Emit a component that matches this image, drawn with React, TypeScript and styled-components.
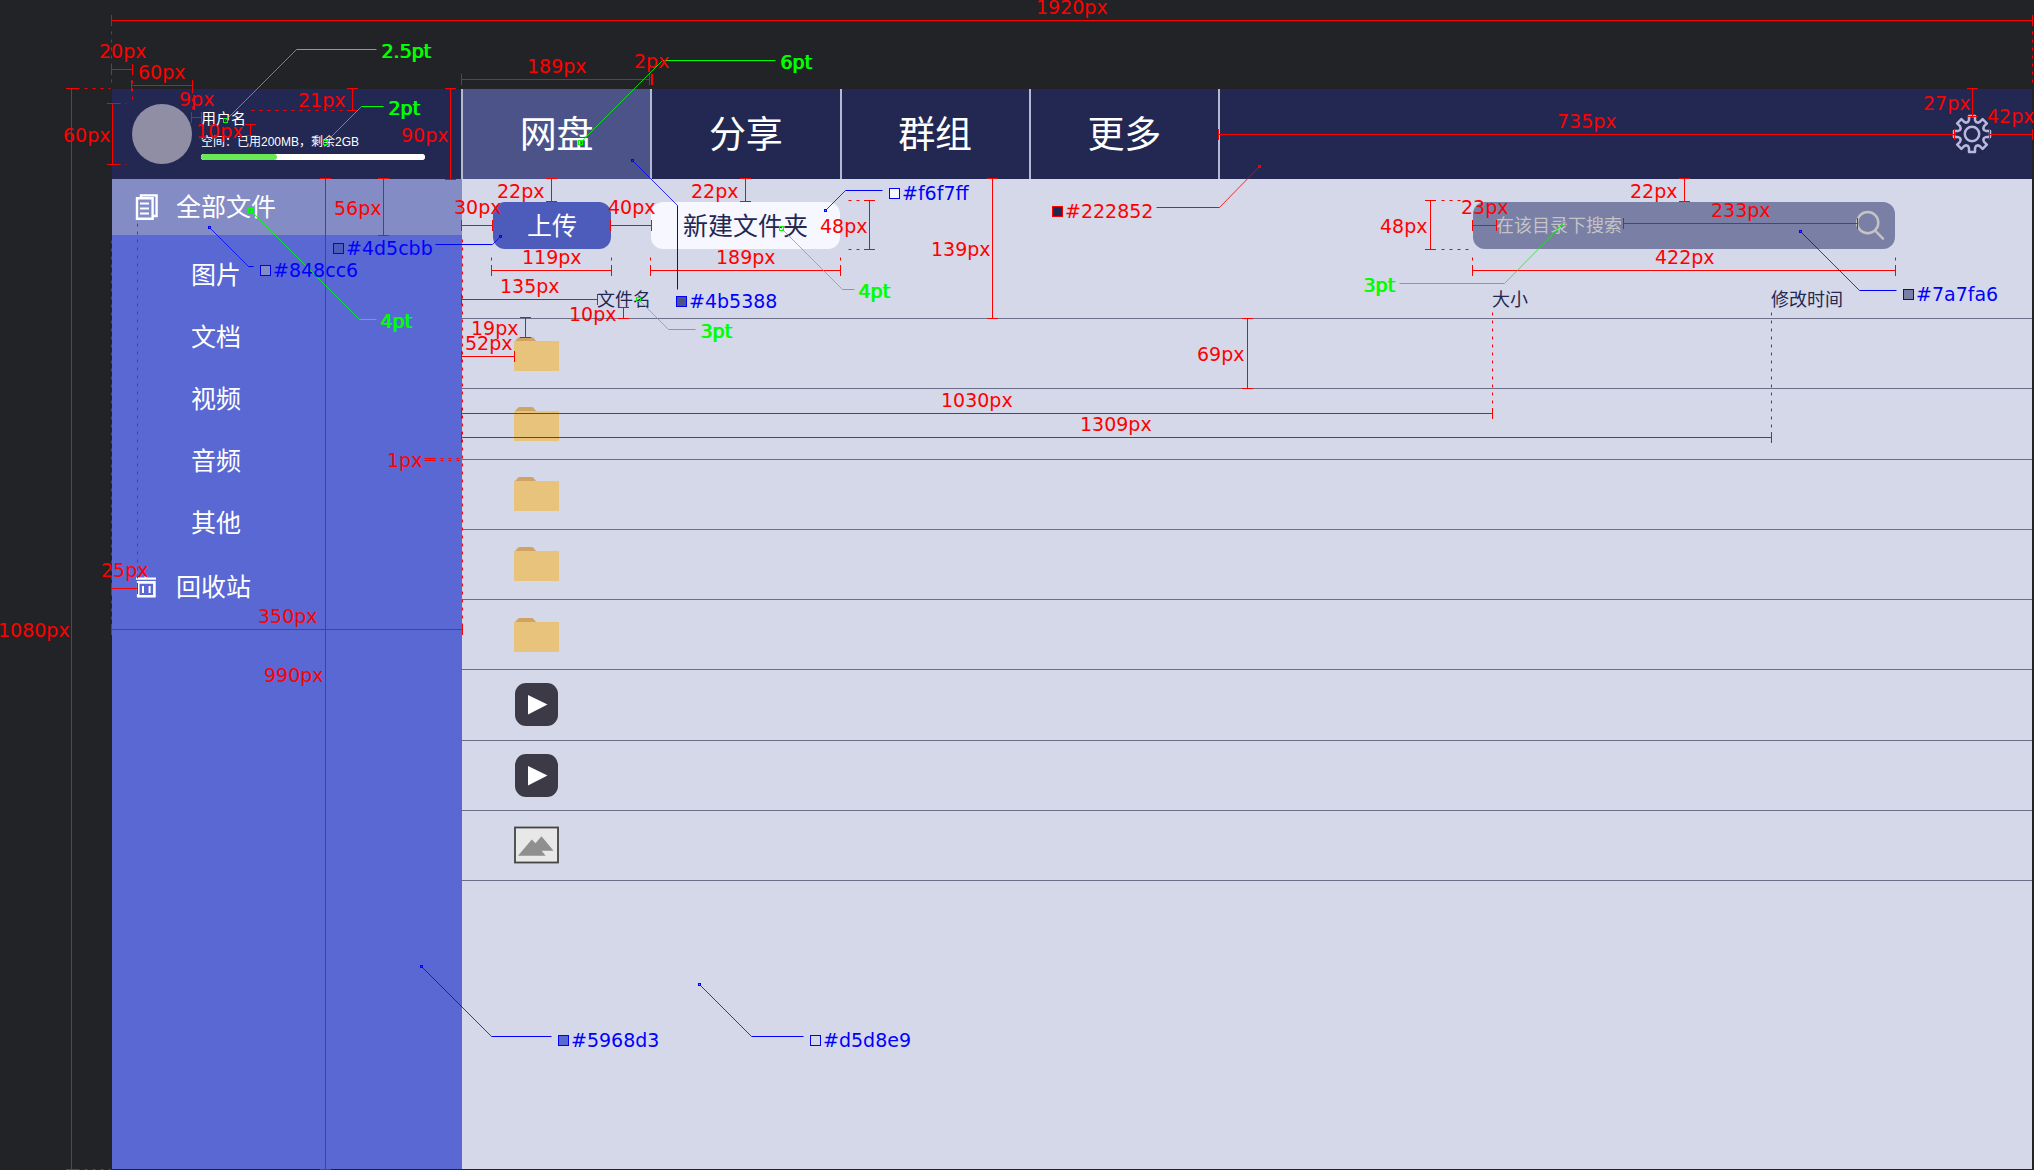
import React from "react";
import styled, { createGlobalStyle } from "styled-components";

const palette = {
  canvas: "#222326",
  navy: "#222852",
  tabActive: "#4b5388",
  divider: "#b4b9d2",
  sidebar: "#5968d3",
  sidebarActive: "#848cc6",
  page: "#d5d8e9",
  primary: "#4d5cbb",
  light: "#f6f7ff",
  search: "#7a7fa6",
  muted: "#c4c4c4",
  rule: "#6c6f87",
};

const tones = { red: "#ff0000", green: "#00ff00", blue: "#0000ff" };
type Tone = keyof typeof tones;

const GlobalStyle = createGlobalStyle`
  *, *::before, *::after { box-sizing: border-box; }
  body {
    margin: 0;
    background: ${palette.canvas};
    font-family: "Liberation Sans", "Noto Sans CJK SC", sans-serif;
  }
  button, input { font: inherit; }
`;

/* ---------- page shell ---------- */

const Board = styled.div`
  position: relative;
  display: flex;
  min-height: 100vh;
  padding: 89px 2px 1px 112px;
  overflow: hidden;
`;

const Frame = styled.div`
  flex: 1;
  display: flex;
  flex-direction: column;
  min-width: 0;
`;

const Header = styled.header`
  display: flex;
  align-items: stretch;
  height: 90px;
  background: ${palette.navy};
  color: #fff;
`;

const Body = styled.div`
  flex: 1;
  display: flex;
`;

/* ---------- header ---------- */

const Profile = styled.section`
  display: flex;
  align-items: center;
  gap: 9px;
  width: 349px;
  padding: 0 36px 0 20px;
`;

const Avatar = styled.div`
  flex: none;
  width: 60px;
  height: 60px;
  border-radius: 50%;
  background: #8f8ea4;
`;

const ProfileText = styled.div`
  flex: 1;
  display: flex;
  flex-direction: column;
`;

const UserName = styled.span`
  font-size: 15px;
  line-height: 20px;
`;

const Quota = styled.label`
  padding-top: 4px;
  font-size: 12px;
  line-height: 18px;
  white-space: nowrap;
`;

const QuotaBar = styled.progress`
  appearance: none;
  display: block;
  width: 100%;
  height: 6px;
  margin-top: 3px;
  border: 0;
  border-radius: 3px;
  background: #fff;
  overflow: hidden;

  &::-webkit-progress-bar { background: #fff; border-radius: 3px; }
  &::-webkit-progress-value { background: #68e854; border-radius: 3px; }
`;

const Tabs = styled.nav`
  display: flex;
  width: 759px;
  border-right: 2px solid ${palette.divider};
`;

const Tab = styled.button<{ $active?: boolean }>`
  flex: 1;
  padding: 4px 0 0;
  border: 0;
  border-left: 2px solid ${palette.divider};
  background: ${(p) => (p.$active ? palette.tabActive : "transparent")};
  color: #fff;
  font-size: 37px;
  line-height: 48px;
`;

const SettingsButton = styled.button`
  display: flex;
  align-items: center;
  margin: 0 40px 0 auto;
  padding: 0;
  border: 0;
  background: none;
  color: #b9b8dc;
`;

/* ---------- sidebar ---------- */

const Sidebar = styled.nav`
  width: 350px;
  background: ${palette.sidebar};
`;

const SideLink = styled.a<{ $active?: boolean }>`
  display: flex;
  align-items: center;
  gap: 16px;
  height: 56px;
  padding-left: 22px;
  background: ${(p) => (p.$active ? palette.sidebarActive : "transparent")};
  color: #fff;
  font-size: 25px;
  line-height: 32px;
  text-decoration: none;
`;

const SubList = styled.ul`
  margin: 0;
  padding: 9px 0 5px;
  list-style: none;
`;

const SubLink = styled.a`
  display: flex;
  align-items: center;
  height: 62px;
  padding-left: 79px;
  color: #fff;
  font-size: 25px;
  line-height: 32px;
  text-decoration: none;
`;

/* ---------- main ---------- */

const Main = styled.main`
  flex: 1;
  min-width: 0;
  background: ${palette.page};
`;

const Toolbar = styled.div`
  display: flex;
  gap: 40px;
  padding: 23px 137px 0 31px;
`;

const ToolButton = styled.button<{ $primary?: boolean }>`
  width: ${(p) => (p.$primary ? "118px" : "189px")};
  height: 47px;
  padding: 0;
  border: 0;
  border-radius: 12px;
  background: ${(p) => (p.$primary ? palette.primary : palette.light)};
  color: ${(p) => (p.$primary ? "#fff" : palette.navy)};
  font-size: 25px;
  line-height: 32px;
`;

const SearchForm = styled.form`
  display: flex;
  align-items: center;
  width: 422px;
  height: 47px;
  margin-left: auto;
  padding: 0 10px 0 23px;
  border-radius: 12px;
  background: ${palette.search};
`;

const SearchInput = styled.input`
  flex: 1;
  min-width: 0;
  height: 100%;
  padding: 2px 0 0;
  border: 0;
  outline: 0;
  background: none;
  color: ${palette.muted};
  font-size: 18px;

  &::placeholder { color: ${palette.muted}; opacity: 1; }
`;

const SearchButton = styled.button`
  display: flex;
  padding: 0;
  border: 0;
  background: none;
  color: ${palette.muted};
`;

const FileTable = styled.table`
  width: 100%;
  height: 632px;
  border-collapse: separate;
  border-spacing: 0;
  table-layout: fixed;
  color: ${palette.navy};
`;

const NameCol = styled.col``;
const SizeCol = styled.col`width: 279px;`;
const TimeCol = styled.col`width: 261px;`;

const Row = styled.tr`
  height: 70px;
`;

const HeadCell = styled.th<{ $first?: boolean }>`
  padding: 0 0 5px ${(p) => (p.$first ? "135px" : "0")};
  border-bottom: 1px solid ${palette.rule};
  font-size: 18px;
  font-weight: 400;
  line-height: 26px;
  text-align: left;
  vertical-align: bottom;
`;

const Cell = styled.td`
  padding: 0;
  border-bottom: 1px solid ${palette.rule};
  vertical-align: middle;
`;

const FileIcon = styled.div`
  display: flex;
  justify-content: center;
  width: 45px;
  margin-left: 52px;
`;

/* ---------- redline layer: sits over the design ---------- */

const Redlines = styled.div`
  position: absolute;
  inset: 0;
  overflow: hidden;
  pointer-events: none;
`;

const RedlineDrawing = styled.svg`
  position: absolute;
  inset: 0;
  width: 100%;
  height: 100%;
`;

const Note = styled.span<{ $x: number; $y: number; $tone: Tone }>`
  position: absolute;
  left: ${(p) => p.$x}px;
  top: ${(p) => p.$y}px;
  display: flex;
  align-items: center;
  gap: 2px;
  color: ${(p) => tones[p.$tone]};
  font-family: "DejaVu Sans", Verdana, sans-serif;
  font-size: 19px;
  line-height: 22px;
  white-space: nowrap;
  text-shadow: ${(p) => (p.$tone === "green" ? "1px 0 0 currentColor" : "none")};
`;

const Swatch = styled.i<{ $fill: string }>`
  width: 11px;
  height: 11px;
  border: 1px solid currentColor;
  background: ${(p) => p.$fill};
`;

/* ---------- icons ---------- */

const gearPath = (() => {
  const points: string[] = [];
  for (let i = 0; i < 8; i++) {
    const a = (i * Math.PI) / 4;
    const tooth = [[-4, -12], [-3, -14], [-3, -18], [3, -18], [3, -14], [4, -12]];
    for (const [x, y] of tooth) {
      const px = x * Math.cos(a) - y * Math.sin(a);
      const py = x * Math.sin(a) + y * Math.cos(a);
      points.push(`${px.toFixed(2)} ${py.toFixed(2)}`);
    }
  }
  return `M${points.join("L")}Z`;
})();

const GearIcon = () => (
  <svg width="40" height="40" viewBox="-20 -20 40 40" fill="none" stroke="currentColor" strokeWidth="2.5" strokeLinejoin="round" aria-hidden="true">
    <path d={gearPath} />
    <circle r="7.2" />
  </svg>
);

const DocsIcon = () => (
  <svg width="26" height="28" viewBox="0 0 26 28" fill="none" stroke="#fff" strokeWidth="2.4" aria-hidden="true">
    <path d="M7 5V2.4H22.6V23H19" />
    <path d="M3 5.2H18.6V25.8H3Z" />
    <path d="M6 10.5H15M6 15.5H15M6 20.5H15" strokeWidth="2" />
  </svg>
);

const TrashIcon = () => (
  <svg width="26" height="28" viewBox="0 0 26 28" fill="none" stroke="#fff" aria-hidden="true">
    <path d="M2 5.6H22" strokeWidth="2.2" />
    <path d="M10.5 4H13.5" strokeWidth="1.5" />
    <path d="M4.2 9.4H20.4V23.2H4.2Z" strokeWidth="2.6" />
    <path d="M9 13V20M15.6 13V20" strokeWidth="2" />
  </svg>
);

const SearchIcon = () => (
  <svg width="29" height="31" viewBox="0 0 29 31" fill="none" stroke="currentColor" strokeWidth="2.5" strokeLinecap="round" aria-hidden="true">
    <circle cx="11.7" cy="12.7" r="10.6" />
    <path d="M19 20.5L27 28.7" />
  </svg>
);

const FolderIcon = () => (
  <svg width="45" height="34" viewBox="0 0 45 34" role="img" aria-label="文件夹">
    <path d="M1 4L4 0.8Q4.8 0 6 0H17.5Q18.8 0 19.5 0.8L22 4Z" fill="#d0a263" />
    <path d="M0 4H45V34H0Z" fill="#e7c37c" />
  </svg>
);

const VideoIcon = () => (
  <svg width="43" height="43" viewBox="0 0 43 43" role="img" aria-label="视频">
    <rect width="43" height="43" rx="11" fill="#3d3a48" />
    <path d="M13 12L32.5 21.5L13 31.5Z" fill="#fff" />
  </svg>
);

const ImageIcon = () => (
  <svg width="45" height="38" viewBox="0 0 45 38" role="img" aria-label="图片">
    <rect x="1" y="1.5" width="43" height="35" fill="#e8e8e8" stroke="#444" strokeWidth="1.8" />
    <path d="M4 29.7L17.8 13.5L21.5 17.2L27.5 10.3L39.5 24.7H27.6L31.6 29.7Z" fill="#8f8f8f" />
  </svg>
);

/* ---------- data ---------- */

const tabs = ["网盘", "分享", "群组", "更多"];
const categories = ["图片", "文档", "视频", "音频", "其他"];
const icons = { folder: FolderIcon, video: VideoIcon, image: ImageIcon };
const files: (keyof typeof icons)[] = [
  "folder", "folder", "folder", "folder", "folder", "video", "video", "image",
];

// Horizontal measures: [y, x1, x2]
const spansX = [
  [20, 111, 2032], [69, 111, 132], [85, 131, 192], [117, 191, 201],
  [79, 461, 649], [79, 651, 652], [225, 461, 492], [225, 610, 651],
  [270, 491, 611], [270, 650, 840], [299, 461, 597], [356, 461, 514],
  [413, 461, 1492], [437, 461, 1771], [225, 1472, 1496], [223, 1623, 1857],
  [270, 1472, 1895], [134, 1218, 1954], [134, 1989, 2032], [629, 111, 462],
  [588, 111, 137],
];

// Vertical measures: [x, y1, y2]
const spansY = [
  [71, 88, 1169], [112, 103, 164], [352, 88, 110], [250, 124, 135],
  [450, 88, 179], [325, 178, 1169], [383, 178, 235], [551, 178, 201],
  [745, 178, 201], [869, 200, 249], [992, 178, 318], [623, 307, 318],
  [525, 317, 337], [1247, 318, 388], [1430, 200, 249], [1684, 178, 201],
  [1972, 88, 116],
];

// Dashed guides: [x1, y1, x2, y2]
const guides = [
  [111, 31, 111, 82], [111, 240, 111, 624], [76, 88, 110, 88], [76, 1169, 110, 1169],
  [117, 103, 126, 103], [117, 164, 126, 164], [132, 80, 132, 99], [192, 90, 192, 112],
  [251, 110, 347, 110], [137, 223, 137, 582], [462, 239, 462, 629],
  [432, 458, 461, 458], [432, 460, 461, 460],
  [491, 257, 491, 264], [611, 257, 611, 264], [650, 257, 650, 264], [840, 257, 840, 264],
  [848, 200, 864, 200], [848, 249, 864, 249],
  [1472, 257, 1472, 264], [1895, 257, 1895, 264],
  [1441, 200, 1466, 200], [1441, 249, 1468, 249],
  [1492, 312, 1492, 408], [1771, 312, 1771, 432], [2032, 31, 2032, 82],
];

const leaders: { tone: Tone; points: number[][] }[] = [
  { tone: "green", points: [[225, 120], [296, 49], [376, 49]] },
  { tone: "green", points: [[325, 142], [361, 106], [383, 106]] },
  { tone: "green", points: [[580, 142], [662, 60], [775, 60]] },
  { tone: "green", points: [[250, 210], [359, 319], [376, 319]] },
  { tone: "green", points: [[781, 228], [842, 289], [854, 289]] },
  { tone: "green", points: [[638, 299], [668, 329], [695, 329]] },
  { tone: "green", points: [[1563, 223], [1504, 283], [1399, 283]] },
  { tone: "blue", points: [[500, 236], [492, 244], [435, 244]] },
  { tone: "blue", points: [[209, 227], [248, 266], [253, 266]] },
  { tone: "blue", points: [[825, 210], [845, 190], [882, 190]] },
  { tone: "blue", points: [[632, 160], [677, 205], [677, 289]] },
  { tone: "blue", points: [[1800, 231], [1859, 290], [1896, 290]] },
  { tone: "blue", points: [[421, 966], [491, 1036], [551, 1036]] },
  { tone: "blue", points: [[699, 984], [751, 1036], [803, 1036]] },
  { tone: "red", points: [[1259, 166], [1219, 207], [1156, 207]] },
];

const notes: { text: string; x: number; y: number; tone?: Tone; fill?: string }[] = [
  { text: "1920px", x: 1036, y: -4 },
  { text: "20px", x: 99, y: 40 },
  { text: "60px", x: 138, y: 61 },
  { text: "9px", x: 179, y: 88 },
  { text: "10px", x: 196, y: 120 },
  { text: "21px", x: 298, y: 89 },
  { text: "90px", x: 401, y: 124 },
  { text: "60px", x: 63, y: 124 },
  { text: "56px", x: 334, y: 197 },
  { text: "30px", x: 454, y: 196 },
  { text: "22px", x: 497, y: 180 },
  { text: "40px", x: 608, y: 196 },
  { text: "22px", x: 691, y: 180 },
  { text: "48px", x: 820, y: 215 },
  { text: "139px", x: 931, y: 238 },
  { text: "119px", x: 522, y: 246 },
  { text: "189px", x: 716, y: 246 },
  { text: "135px", x: 500, y: 275 },
  { text: "10px", x: 569, y: 303 },
  { text: "19px", x: 471, y: 317 },
  { text: "52px", x: 465, y: 332 },
  { text: "189px", x: 527, y: 55 },
  { text: "2px", x: 634, y: 50 },
  { text: "69px", x: 1197, y: 343 },
  { text: "1030px", x: 941, y: 389 },
  { text: "1309px", x: 1080, y: 413 },
  { text: "48px", x: 1380, y: 215 },
  { text: "23px", x: 1461, y: 196 },
  { text: "22px", x: 1630, y: 180 },
  { text: "233px", x: 1711, y: 199 },
  { text: "422px", x: 1655, y: 246 },
  { text: "735px", x: 1557, y: 110 },
  { text: "27px", x: 1923, y: 92 },
  { text: "42px", x: 1987, y: 105 },
  { text: "1px", x: 387, y: 449 },
  { text: "350px", x: 258, y: 605 },
  { text: "990px", x: 264, y: 664 },
  { text: "25px", x: 101, y: 559 },
  { text: "1080px", x: -2, y: 619 },
  { text: "2.5pt", x: 381, y: 40, tone: "green" },
  { text: "2pt", x: 388, y: 97, tone: "green" },
  { text: "6pt", x: 780, y: 51, tone: "green" },
  { text: "4pt", x: 380, y: 310, tone: "green" },
  { text: "4pt", x: 858, y: 280, tone: "green" },
  { text: "3pt", x: 700, y: 320, tone: "green" },
  { text: "3pt", x: 1363, y: 274, tone: "green" },
  { text: "#222852", x: 1052, y: 200, fill: palette.navy },
  { text: "#f6f7ff", x: 889, y: 182, tone: "blue", fill: palette.light },
  { text: "#4b5388", x: 676, y: 290, tone: "blue", fill: palette.tabActive },
  { text: "#4d5cbb", x: 333, y: 237, tone: "blue", fill: palette.primary },
  { text: "#848cc6", x: 260, y: 259, tone: "blue", fill: palette.sidebarActive },
  { text: "#7a7fa6", x: 1903, y: 283, tone: "blue", fill: palette.search },
  { text: "#5968d3", x: 558, y: 1029, tone: "blue", fill: palette.sidebar },
  { text: "#d5d8e9", x: 810, y: 1029, tone: "blue", fill: palette.page },
];

const RedlineLayer = () => (
  <Redlines>
    <RedlineDrawing fill="none" strokeWidth="1" aria-hidden="true">
      <g transform="translate(0.5 0.5)">
        <g stroke={tones.red}>
          {spansX.map(([y, x1, x2], i) => (
            <path key={i} d={`M${x1} ${y}H${x2}M${x1} ${y - 5.5}v11M${x2} ${y - 5.5}v11`} />
          ))}
          {spansY.map(([x, y1, y2], i) => (
            <path key={i} d={`M${x} ${y1}V${y2}M${x - 5.5} ${y1}h11M${x - 5.5} ${y2}h11`} />
          ))}
          {guides.map(([x1, y1, x2, y2], i) => (
            <path key={i} d={`M${x1} ${y1}L${x2} ${y2}`} strokeDasharray="3 5" />
          ))}
          <path d="M424 458h11M424 460h11M429 458v2" />
        </g>
        {leaders.map(({ tone, points: [dot, bend, end] }, i) => {
          const r = tone === "green" ? 2 : 1;
          return (
            <g key={i} stroke={tones[tone]}>
              <path d={`M${dot.join(" ")}L${bend.join(" ")}`} opacity="0.8" />
              <path d={`M${bend.join(" ")}L${end.join(" ")}`} />
              <rect x={dot[0] - r} y={dot[1] - r} width={r * 2} height={r * 2} />
            </g>
          );
        })}
      </g>
    </RedlineDrawing>
    {notes.map((n, i) => (
      <Note key={i} $x={n.x} $y={n.y} $tone={n.tone ?? "red"}>
        {n.fill && <Swatch $fill={n.fill} />}
        {n.text}
      </Note>
    ))}
  </Redlines>
);

export default function App() {
  return (
    <Board>
      <GlobalStyle />
      <Frame>
        <Header>
          <Profile>
            <Avatar />
            <ProfileText>
              <UserName>用户名</UserName>
              <Quota htmlFor="quota">空间：已用200MB，剩余2GB</Quota>
              <QuotaBar id="quota" value={34} max={100} />
            </ProfileText>
          </Profile>
          <Tabs>
            {tabs.map((t, i) => (
              <Tab key={t} type="button" $active={i === 0}>{t}</Tab>
            ))}
          </Tabs>
          <SettingsButton type="button" aria-label="设置">
            <GearIcon />
          </SettingsButton>
        </Header>
        <Body>
          <Sidebar>
            <SideLink href="#all" $active>
              <DocsIcon />
              全部文件
            </SideLink>
            <SubList>
              {categories.map((c) => (
                <li key={c}><SubLink href={`#${c}`}>{c}</SubLink></li>
              ))}
            </SubList>
            <SideLink href="#trash">
              <TrashIcon />
              回收站
            </SideLink>
          </Sidebar>
          <Main>
            <Toolbar>
              <ToolButton type="button" $primary>上传</ToolButton>
              <ToolButton type="button">新建文件夹</ToolButton>
              <SearchForm role="search" onSubmit={(e) => e.preventDefault()}>
                <SearchInput type="text" placeholder="在该目录下搜索" aria-label="在该目录下搜索" />
                <SearchButton type="submit" aria-label="搜索"><SearchIcon /></SearchButton>
              </SearchForm>
            </Toolbar>
            <FileTable>
              <colgroup><NameCol /><SizeCol /><TimeCol /></colgroup>
              <thead>
                <Row>
                  <HeadCell $first scope="col">文件名</HeadCell>
                  <HeadCell scope="col">大小</HeadCell>
                  <HeadCell scope="col">修改时间</HeadCell>
                </Row>
              </thead>
              <tbody>
                {files.map((kind, i) => {
                  const Icon = icons[kind];
                  return (
                    <Row key={i}>
                      <Cell><FileIcon><Icon /></FileIcon></Cell>
                      <Cell />
                      <Cell />
                    </Row>
                  );
                })}
              </tbody>
            </FileTable>
          </Main>
        </Body>
      </Frame>
      <RedlineLayer />
    </Board>
  );
}
